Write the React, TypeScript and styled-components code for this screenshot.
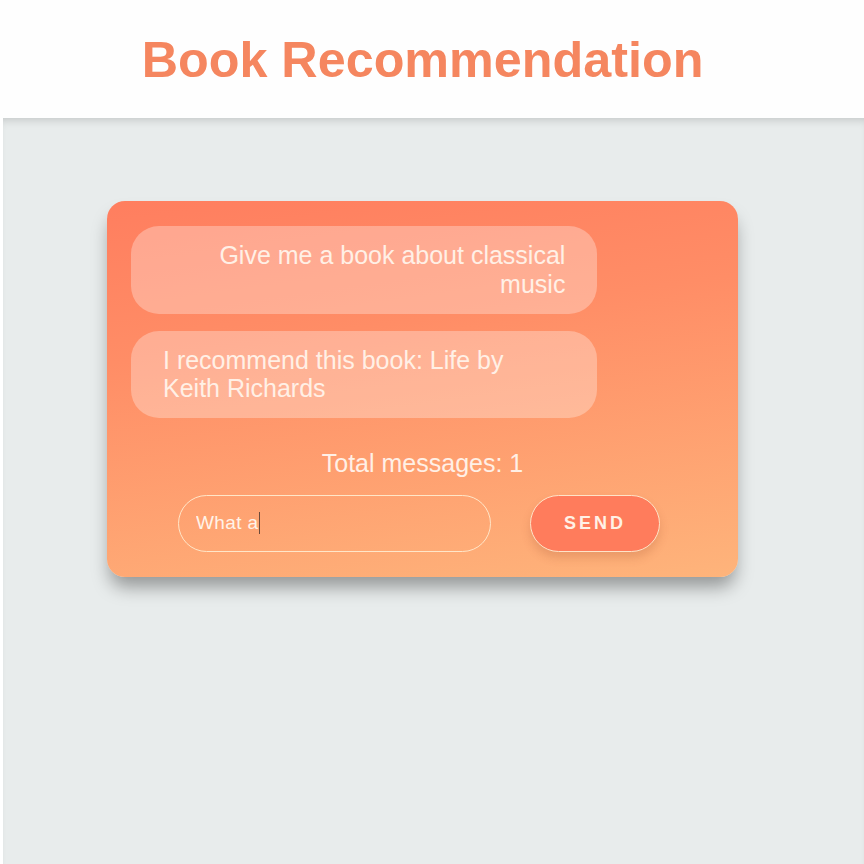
import React, { useState } from "react";
import styled, { createGlobalStyle } from "styled-components";

const GlobalStyle = createGlobalStyle`
  html, body {
    margin: 0;
    padding: 0;
    background: #ffffff;
    font-family: "Liberation Sans", Arial, Helvetica, sans-serif;
  }
  * {
    box-sizing: border-box;
  }
`;

const Page = styled.div`
  display: flex;
  flex-direction: column;
  min-height: 100vh;
`;

const Header = styled.header`
  height: 118px;
  display: flex;
  align-items: center;
  justify-content: center;
  padding-right: 19px;
  background: #fefefe;
`;

const Title = styled.h1`
  margin: 0;
  font-size: 50.3px;
  font-weight: 700;
  color: #f5865f;
`;

const Main = styled.main`
  flex: 1;
  margin-left: 3px;
  padding: 83px 22px 40px 0;
  background: #e8ecec;
  box-shadow: inset 0 7px 8px -5px rgba(0, 0, 0, 0.16);
  display: flex;
  justify-content: center;
  align-items: flex-start;
`;

const ChatCard = styled.section`
  width: 631px;
  padding: 25px 24px;
  border-radius: 18px;
  background: linear-gradient(172deg, #ff7e5f 0%, #ff8d66 35%, #feb47b 100%);
  box-shadow: 0 13px 18px -3px rgba(0, 0, 0, 0.36);
  display: flex;
  flex-direction: column;
`;

const MessageList = styled.div`
  display: flex;
  flex-direction: column;
  gap: 17px;
`;

const Bubble = styled.div<{ $fromUser?: boolean }>`
  width: 80%;
  padding: 15px 32px;
  border-radius: 28px;
  background: rgba(255, 255, 255, 0.3);
  color: #fff0e6;
  font-size: 25px;
  line-height: 1.15;
  text-align: ${({ $fromUser }) => ($fromUser ? "right" : "left")};
`;

const Counter = styled.div`
  margin-top: 31px;
  text-align: center;
  color: #fff0e6;
  font-size: 25px;
  line-height: 1.15;
`;

const InputRow = styled.form`
  margin-top: 17px;
  display: flex;
  justify-content: center;
  gap: 39px;
  padding-right: 7px;
`;

const InputWrap = styled.div`
  position: relative;
  width: 313px;
  height: 57px;
`;

const MessageInput = styled.input`
  width: 100%;
  height: 100%;
  padding: 0 17px;
  border: 1.5px solid #ffe6c8;
  border-radius: 29px;
  background: transparent;
  color: #fff3e8;
  font-family: "Liberation Sans", Arial, sans-serif;
  font-size: 19px;
  letter-spacing: 0.4px;
  outline: none;
`;

const CaretLayer = styled.div`
  position: absolute;
  inset: 0;
  padding: 0 18.5px;
  display: flex;
  align-items: center;
  pointer-events: none;
  font-family: "Liberation Sans", Arial, sans-serif;
  font-size: 19px;
  letter-spacing: 0.4px;
  white-space: pre;
`;

const Ghost = styled.span`
  visibility: hidden;
`;

const Caret = styled.span`
  display: inline-block;
  width: 1px;
  height: 22px;
  margin-left: 0;
  background: #6b4a3a;
`;

const SendButton = styled.button`
  width: 130px;
  height: 57px;
  border: 1.5px solid #ffe3c8;
  border-radius: 29px;
  background: #ff7c5c;
  color: #fff1e6;
  font-family: "Liberation Sans", Arial, sans-serif;
  font-size: 18px;
  font-weight: 700;
  letter-spacing: 3px;
  padding-left: 6px;
  box-shadow: 0 6px 10px rgba(150, 70, 40, 0.2);
  cursor: pointer;
`;

const messages = [
  { id: 1, fromUser: true, text: "Give me a book about classical music" },
  { id: 2, fromUser: false, text: "I recommend this book: Life by Keith Richards" },
];

export default function App() {
  const [draft, setDraft] = useState("What a");

  return (
    <>
      <GlobalStyle />
      <Page>
        <Header>
          <Title>Book Recommendation</Title>
        </Header>
        <Main>
          <ChatCard>
            <MessageList>
              {messages.map((m) => (
                <Bubble key={m.id} $fromUser={m.fromUser}>
                  {m.text}
                </Bubble>
              ))}
            </MessageList>
            <Counter>Total messages: {messages.length - 1}</Counter>
            <InputRow onSubmit={(e) => e.preventDefault()}>
              <InputWrap>
                <MessageInput value={draft} onChange={(e) => setDraft(e.target.value)} />
                <CaretLayer aria-hidden="true">
                  <Ghost>{draft}</Ghost>
                  <Caret />
                </CaretLayer>
              </InputWrap>
              <SendButton type="submit">SEND</SendButton>
            </InputRow>
          </ChatCard>
        </Main>
      </Page>
    </>
  );
}
